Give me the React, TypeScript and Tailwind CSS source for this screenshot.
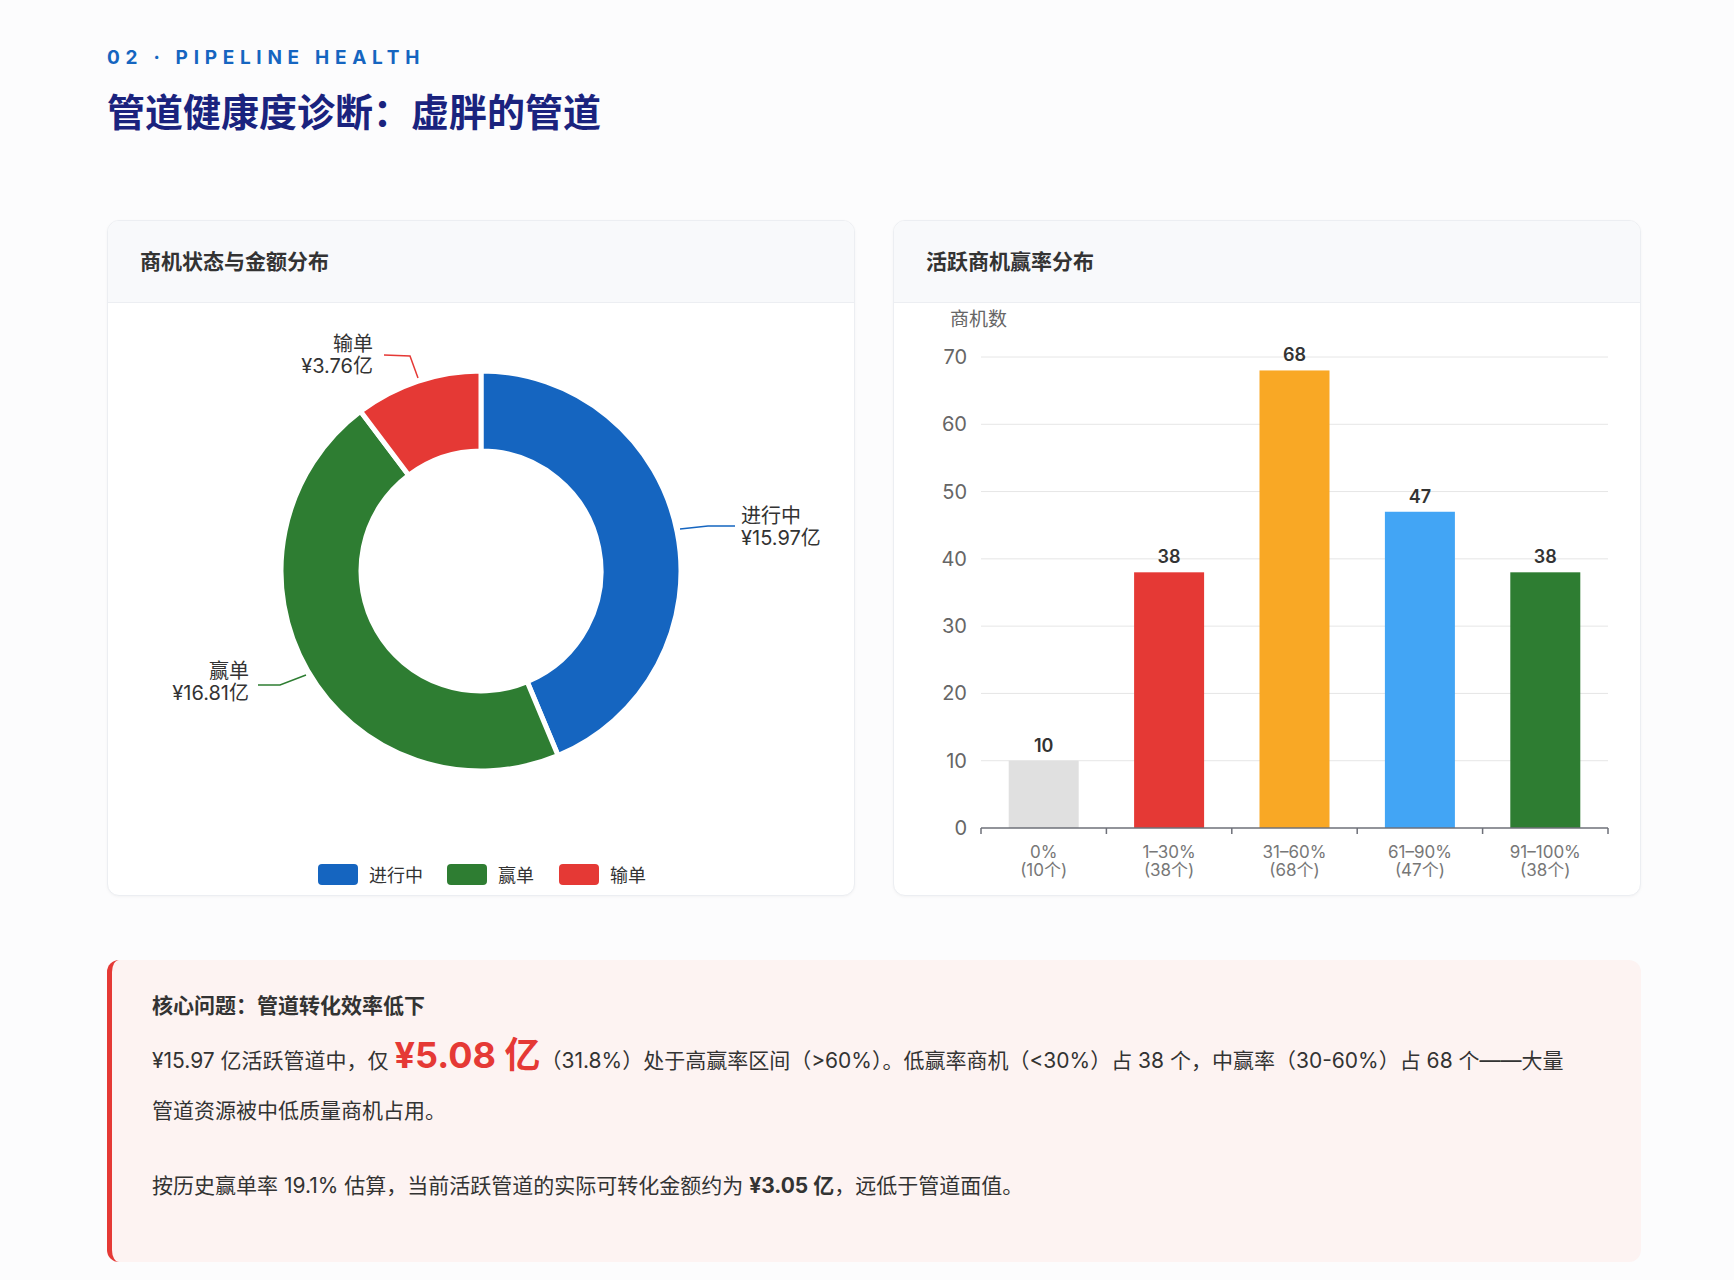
const font = { fontFamily: '"Inter", "Noto Sans CJK SC", sans-serif' };

function arc(cx: number, cy: number, r: number, R: number, a0: number, a1: number) {
  const p = (rad: number, a: number) => {
    const t = ((a - 90) * Math.PI) / 180;
    return `${cx + rad * Math.cos(t)} ${cy + rad * Math.sin(t)}`;
  };
  const large = a1 - a0 > 180 ? 1 : 0;
  return `M ${p(R, a0)} A ${R} ${R} 0 ${large} 1 ${p(R, a1)} L ${p(r, a1)} A ${r} ${r} 0 ${large} 0 ${p(r, a0)} Z`;
}

const slices = [
  { name: "进行中", v: 15.97, color: "#1565c0" },
  { name: "赢单", v: 16.81, color: "#2e7d32" },
  { name: "输单", v: 3.76, color: "#e53935" },
];

function Donut() {
  const total = slices.reduce((s, x) => s + x.v, 0);
  let a = 0;
  return (
    <svg width="746" height="594" className="block">
      {slices.map((s) => {
        const a0 = a;
        a += (s.v / total) * 360;
        return <path key={s.name} d={arc(373, 268, 120, 200, a0, a)} fill={s.color} stroke="#fff" strokeWidth="5" strokeLinejoin="round" />;
      })}
      <polyline points="572,226 600,223 627,223" fill="none" stroke="#1565c0" strokeWidth="1.5" />
      <text x="633" y="220" fontSize="20" fill="#333">进行中</text>
      <text x="633" y="242" fontSize="20" fill="#333">¥15.97亿</text>
      <polyline points="198,372 172,382 150,382" fill="none" stroke="#2e7d32" strokeWidth="1.5" />
      <text x="141" y="375" fontSize="20" fill="#333" textAnchor="end">赢单</text>
      <text x="141" y="397" fontSize="20" fill="#333" textAnchor="end">¥16.81亿</text>
      <polyline points="310,75 302,53 276,52" fill="none" stroke="#e53935" strokeWidth="1.5" />
      <text x="265" y="48" fontSize="20" fill="#333" textAnchor="end">输单</text>
      <text x="265" y="70" fontSize="20" fill="#333" textAnchor="end">¥3.76亿</text>
      {slices.map((s, i) => {
        const x = [210, 339, 451][i];
        return (
          <g key={s.name}>
            <rect x={x} y="561" width="40" height="21" rx="4" fill={s.color} />
            <text x={x + 51} y="579" fontSize="18" fill="#333">{s.name}</text>
          </g>
        );
      })}
    </svg>
  );
}

const bars = [
  { l: "0%", c: "(10个)", v: 10, color: "#e0e0e0" },
  { l: "1–30%", c: "(38个)", v: 38, color: "#e53935" },
  { l: "31–60%", c: "(68个)", v: 68, color: "#f9a825" },
  { l: "61–90%", c: "(47个)", v: 47, color: "#42a5f5" },
  { l: "91–100%", c: "(38个)", v: 38, color: "#2e7d32" },
];

function Bars() {
  const x0 = 87, x1 = 714, y0 = 525, unit = 471 / 70;
  const w = (x1 - x0) / 5;
  return (
    <svg width="746" height="594" className="block">
      <text x="56" y="23" fontSize="19" fill="#666">商机数</text>
      {[0, 10, 20, 30, 40, 50, 60, 70].map((t) => (
        <g key={t}>
          {t > 0 && <line x1={x0} x2={x1} y1={y0 - t * unit} y2={y0 - t * unit} stroke="#e6e6e6" />}
          <text x="73" y={y0 - t * unit + 7} fontSize="20" fill="#666" textAnchor="end">{t}</text>
        </g>
      ))}
      {bars.map((b, i) => {
        const cx = x0 + w * i + w / 2;
        const h = b.v * unit;
        return (
          <g key={b.l}>
            <rect x={cx - 35} y={y0 - h} width="70" height={h} fill={b.color} />
            <text x={cx} y={y0 - h - 9} fontSize="18" fontWeight="600" fill="#333" textAnchor="middle">{b.v}</text>
            <text x={cx} y={y0 + 30} fontSize="17" fill="#777" textAnchor="middle">{b.l}</text>
            <text x={cx} y={y0 + 48} fontSize="17" fill="#777" textAnchor="middle">{b.c}</text>
          </g>
        );
      })}
      <line x1={x0} x2={x1} y1={y0} y2={y0} stroke="#6e7079" strokeWidth="1.5" />
      {[0, 1, 2, 3, 4, 5].map((i) => (
        <line key={i} x1={x0 + w * i} x2={x0 + w * i} y1={y0} y2={y0 + 6} stroke="#6e7079" strokeWidth="1.5" />
      ))}
    </svg>
  );
}

function Card({ title, children }: { title: string; children: React.ReactNode }) {
  return (
    <div className="w-[748px] h-[676px] rounded-xl border border-[#eceef2] bg-white overflow-hidden shadow-[0_1px_3px_rgba(0,0,0,0.04)]">
      <div className="h-[82px] px-8 flex items-center bg-[#f8f9fb] border-b border-[#eceef2] text-[21px] font-semibold text-[#333]">{title}</div>
      {children}
    </div>
  );
}

export default function App() {
  return (
    <div className="w-[1734px] h-[1280px] bg-[#fcfcfd] pl-[107px] pr-[93px] pt-[44px]" style={font}>
      <div className="text-[19px] font-bold tracking-[0.3em] text-[#1565c0]">02 · PIPELINE HEALTH</div>
      <h1 className="mt-[16px] text-[38px] font-bold text-[#1a237e] leading-tight">管道健康度诊断：虚胖的管道</h1>
      <div className="mt-[84px] flex justify-between">
        <Card title="商机状态与金额分布"><Donut /></Card>
        <Card title="活跃商机赢率分布"><Bars /></Card>
      </div>
      <div className="mt-[64px] h-[302px] rounded-xl bg-[#fdf3f2] border-l-[5px] border-[#e53935] pl-[40px] pr-[60px] pt-[30px] text-[21px] text-[#333]">
        <div className="font-bold">核心问题：管道转化效率低下</div>
        <p className="mt-[14px] leading-[50px]">
          ¥15.97 亿活跃管道中，仅 <span className="text-[36px] leading-none font-bold text-[#e53935]">¥5.08 亿</span>（31.8%）处于高赢率区间（&gt;60%）。低赢率商机（&lt;30%）占 38 个，中赢率（30-60%）占 68 个——大量管道资源被中低质量商机占用。
        </p>
        <p className="mt-[34px]">
          按历史赢单率 19.1% 估算，当前活跃管道的实际可转化金额约为 <b>¥3.05 亿</b>，远低于管道面值。
        </p>
      </div>
    </div>
  );
}
